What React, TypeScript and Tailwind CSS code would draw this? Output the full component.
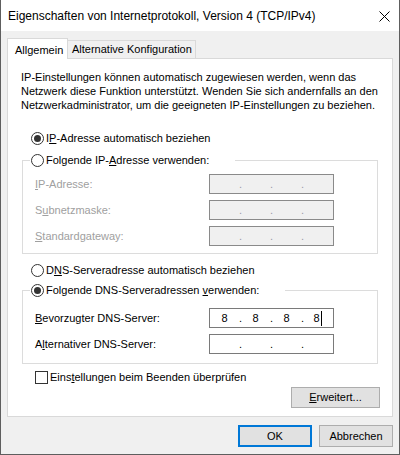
import React from "react";

const font = { fontFamily: '"Segoe UI", "Liberation Sans", Arial, sans-serif' };

function Radio({ checked, disabled }: { checked?: boolean; disabled?: boolean }) {
  return (
    <span
      className={`flex h-[13px] w-[13px] shrink-0 items-center justify-center rounded-full border bg-white ${
        disabled ? "border-[#bcbcbc]" : "border-[#333333]"
      }`}
    >
      {checked && <span className="h-[7px] w-[7px] rounded-full bg-[#333333]" />}
    </span>
  );
}

function IpField({ value, disabled, cursor }: { value?: string[]; disabled?: boolean; cursor?: boolean }) {
  const parts = value ?? ["", "", "", ""];
  return (
    <div
      className={`flex h-[20px] w-[125px] items-center border ${
        disabled ? "border-[#8a8a8a] bg-[#f0f0f0] text-[#9a9aa8]" : "border-[#7a7a7a] bg-white text-black"
      }`}
    >
      {parts.map((p, i) => (
        <React.Fragment key={i}>
          <span className="flex w-[29px] items-center justify-center">
            {p}
            {cursor && i === 3 && <span className="ml-[1px] inline-block h-[15px] w-px bg-black" />}
          </span>
          {i < 3 && <span className="w-[2px] text-center leading-none">.</span>}
        </React.Fragment>
      ))}
    </div>
  );
}

function FieldRow({
  label,
  disabled,
  value,
  cursor,
}: {
  label: React.ReactNode;
  disabled?: boolean;
  value?: string[];
  cursor?: boolean;
}) {
  return (
    <div className="flex h-[20px] items-center">
      <span className={`w-[174px] ${disabled ? "text-[#a0a0a0]" : "text-black"}`}>{label}</span>
      <IpField value={value} disabled={disabled} cursor={cursor} />
    </div>
  );
}

export default function App() {
  return (
    <div
      className="flex h-[455px] w-[400px] flex-col border-x border-b border-[#5e5e5e] bg-[#f0f0f0] text-[11px] text-black"
      style={font}
    >
      {/* Title bar */}
      <div className="flex h-[31px] shrink-0 items-center justify-between bg-white pl-[7px] pr-[9px]">
        <span className="pt-[1px] text-[12px]">Eigenschaften von Internetprotokoll, Version 4 (TCP/IPv4)</span>
        <svg width="11" height="11" viewBox="0 0 11 11" className="mt-[1px]">
          <path d="M0.5 0.5 L10.5 10.5 M10.5 0.5 L0.5 10.5" stroke="#000" strokeWidth="1" />
        </svg>
      </div>

      {/* Tabs */}
      <div className="flex items-end px-[6px] pt-[7px]">
        <div className="relative z-10 -mb-px flex h-[21px] w-[61px] items-start border border-b-0 border-[#d9d9d9] bg-white pl-[7px] pt-[3px]">
          Allgemein
        </div>
        <div className="flex h-[18px] w-[128px] items-center border-r border-t border-[#d9d9d9] bg-[#f0f0f0] pl-[4px]">
          Alternative Konfiguration
        </div>
      </div>

      {/* Panel */}
      <div className="mx-[6px] flex h-[359px] flex-col border border-[#d9d9d9] bg-white">
        <p className="ml-[13px] mt-[11px] whitespace-nowrap leading-[14px]">
          IP-Einstellungen können automatisch zugewiesen werden, wenn das
          <br />
          Netzwerk diese Funktion unterstützt. Wenden Sie sich andernfalls an den
          <br />
          Netzwerkadministrator, um die geeigneten IP-Einstellungen zu beziehen.
        </p>

        <div className="ml-[23px] mt-[16px] flex h-[20px] items-center gap-[2px]">
          <Radio checked />
          <span>
            I<u>P</u>-Adresse automatisch beziehen
          </span>
        </div>

        <fieldset className="mx-[14px] mt-[2px] border border-[#dcdcdc] px-[12px] pb-[7px]">
          <legend className="-ml-[5px] flex h-[20px] w-[205px] items-center gap-[2px] pl-[1px]">
            <Radio />
            <span>
              Folgende IP-<u>A</u>dresse verwenden:
            </span>
          </legend>
          <div className="mt-[4px] flex flex-col gap-[6px]">
            <FieldRow
              disabled
              label={
                <>
                  <u>I</u>P-Adresse:
                </>
              }
            />
            <FieldRow
              disabled
              label={
                <>
                  S<u>u</u>bnetzmaske:
                </>
              }
            />
            <FieldRow
              disabled
              label={
                <>
                  <u>S</u>tandardgateway:
                </>
              }
            />
          </div>
        </fieldset>

        <div className="ml-[23px] mt-[6px] flex h-[20px] items-center gap-[2px]">
          <Radio />
          <span>
            D<u>N</u>S-Serveradresse automatisch beziehen
          </span>
        </div>

        <fieldset className="mx-[14px] border border-[#dcdcdc] px-[12px] pb-[9px]">
          <legend className="-ml-[5px] flex h-[20px] w-[255px] items-center gap-[2px] pl-[1px]">
            <Radio checked />
            <span>
              Folgende DNS-Serveradressen <u>v</u>erwenden:
            </span>
          </legend>
          <div className="mt-[8px] flex flex-col gap-[6px]">
            <FieldRow
              value={["8", "8", "8", "8"]}
              cursor
              label={
                <>
                  <u>B</u>evorzugter DNS-Server:
                </>
              }
            />
            <FieldRow
              label={
                <>
                  A<u>l</u>ternativer DNS-Server:
                </>
              }
            />
          </div>
        </fieldset>

        <div className="ml-[27px] mt-[4px] flex h-[18px] items-center gap-[2px]">
          <span className="h-[13px] w-[13px] border border-[#333333] bg-white" />
          <span>
            Eins<u>t</u>ellungen beim Beenden überprüfen
          </span>
        </div>

        <div className="mr-[12px] mt-[1px] flex justify-end">
          <button className="h-[21px] w-[89px] border border-[#adadad] bg-[#e1e1e1]">
            <u>E</u>rweitert...
          </button>
        </div>
      </div>

      {/* Footer buttons */}
      <div className="mr-[6px] mt-[8px] flex justify-end gap-[7px]">
        <button className="h-[22px] w-[74px] border-2 border-[#0078d7] bg-[#e1e1e1]">OK</button>
        <button className="h-[22px] w-[74px] border border-[#adadad] bg-[#e1e1e1]">Abbrechen</button>
      </div>
    </div>
  );
}
